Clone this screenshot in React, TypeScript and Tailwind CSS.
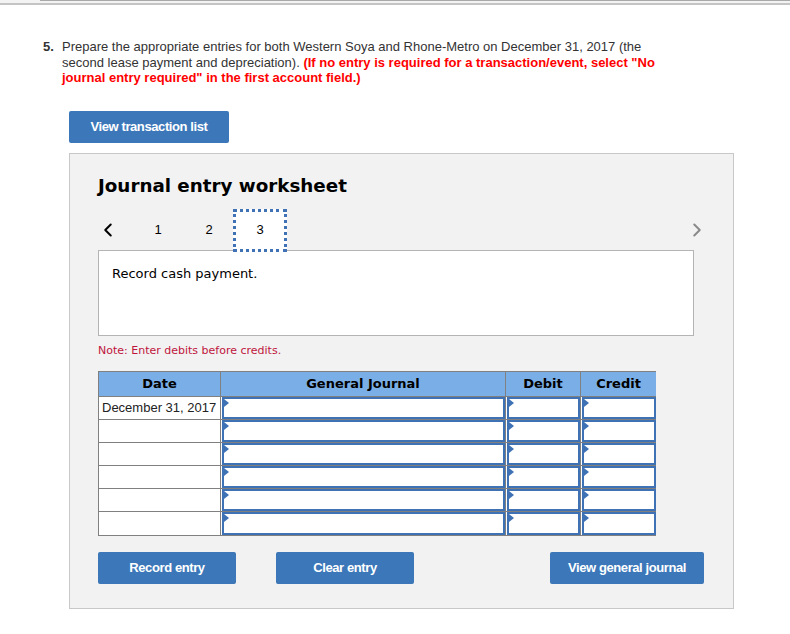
import { ChevronLeft, ChevronRight } from "lucide-react";

const rows = ["December 31, 2017", "", "", "", "", ""];

function InputCell() {
  return (
    <div className="relative h-full border-2 border-[#3f72b5] bg-white">
      <span className="absolute left-0 top-0 h-0 w-0 border-y-[4px] border-l-[5px] border-y-transparent border-l-[#3f72b5]" />
    </div>
  );
}

export default function App() {
  return (
    <div className="relative h-[634px] w-[790px] overflow-hidden bg-white font-['Liberation_Sans',Arial,sans-serif]">
      {/* top strip */}
      <div className="h-[5px] border-b-2 border-[#c4c4c4] bg-[#f3f3f3]">
        <div className="ml-[40px] h-px bg-[#a9a9a9]" />
      </div>

      {/* question */}
      <div className="mt-[34px] flex pl-[43px] text-[13px] leading-[15.5px] text-[#333]">
        <span className="w-[19px] shrink-0 font-bold">5.</span>
        <p className="w-[596px]">
          Prepare the appropriate entries for both Western Soya and Rhone-Metro on December 31, 2017 (the
          second lease payment and depreciation).{" "}
          <span className="font-bold text-[#ff0000]">
            (If no entry is required for a transaction/event, select "No journal entry required" in the first
            account field.)
          </span>
        </p>
      </div>

      <div className="mt-[25px] pl-[69px]">
        <button className="h-[32px] w-[160px] rounded-[2px] bg-[#3b77b9] text-[13px] font-bold tracking-[-0.4px] text-white">
          View transaction list
        </button>
      </div>

      {/* worksheet panel */}
      <div className="ml-[69px] mt-[10px] h-[456px] w-[665px] border border-[#c8c8c8] bg-[#f2f2f2] pl-[28px] pt-[21px]">
        <h2 className="font-['DejaVu_Sans',Verdana,sans-serif] text-[18.3px] font-bold leading-[22px] text-black">
          Journal entry worksheet
        </h2>

        <div className="mt-[12px] flex h-[43px] w-[596px] items-center text-[13px] text-black">
          <ChevronLeft className="ml-[-1px] h-[22px] w-[22px] text-black" strokeWidth={2.2} />
          <span className="ml-[34px] w-[10px] text-center">1</span>
          <span className="ml-[41px] w-[10px] text-center">2</span>
          <span className="ml-[19px] flex h-[43px] w-[54px] items-center justify-center border-[3px] border-dotted border-[#3f72b5] bg-white">
            3
          </span>
          <ChevronRight className="ml-auto mr-[-14px] h-[22px] w-[22px] text-[#8a8a8a]" strokeWidth={2.2} />
        </div>

        <div className="mt-[-2px] h-[86px] w-[596px] border border-[#b4b4b4] bg-white pl-[13px] pt-[13px] font-['DejaVu_Sans',Verdana,sans-serif] text-[13px] text-black">
          Record cash payment.
        </div>

        <p className="mt-[8px] font-['DejaVu_Sans',Verdana,sans-serif] text-[11px] leading-[14px] text-[#c0143c]">
          Note: Enter debits before credits.
        </p>

        <div className="mt-[13px] grid w-[558px] grid-cols-[122px_285px_75px_75px] border border-[#808080] bg-white">
          <div className="flex h-[25px] items-center justify-center border-r border-b border-[#808080] bg-[#7aaee6] font-['DejaVu_Sans',Verdana,sans-serif] text-[13px] font-bold">
            Date
          </div>
          <div className="flex h-[25px] items-center justify-center border-r border-b border-[#808080] bg-[#7aaee6] font-['DejaVu_Sans',Verdana,sans-serif] text-[13px] font-bold">
            General Journal
          </div>
          <div className="flex h-[25px] items-center justify-center border-r border-b border-[#808080] bg-[#7aaee6] font-['DejaVu_Sans',Verdana,sans-serif] text-[13px] font-bold">
            Debit
          </div>
          <div className="flex h-[25px] items-center justify-center border-b border-[#808080] bg-[#7aaee6] font-['DejaVu_Sans',Verdana,sans-serif] text-[13px] font-bold">
            Credit
          </div>
          {rows.map((date, i) => (
            <div key={i} className="contents">
              <div
                className={`flex h-[23px] items-center border-r border-[#808080] pl-[3px] text-[13px] text-[#222] ${
                  i < rows.length - 1 ? "border-b" : ""
                }`}
              >
                {date}
              </div>
              <div className={`h-[23px] border-r border-[#808080] pl-px ${i < rows.length - 1 ? "border-b" : ""}`}>
                <InputCell />
              </div>
              <div className={`h-[23px] border-r border-[#808080] pl-px ${i < rows.length - 1 ? "border-b" : ""}`}>
                <InputCell />
              </div>
              <div className={`h-[23px] border-[#808080] pl-px ${i < rows.length - 1 ? "border-b" : ""}`}>
                <InputCell />
              </div>
            </div>
          ))}
        </div>

        <div className="mt-[16px] flex w-[606px] text-[13px] font-bold tracking-[-0.4px] text-white">
          <button className="h-[32px] w-[138px] rounded-[2px] bg-[#3b77b9]">Record entry</button>
          <button className="ml-[40px] h-[32px] w-[138px] rounded-[2px] bg-[#3b77b9]">Clear entry</button>
          <button className="ml-auto h-[32px] w-[154px] rounded-[2px] bg-[#3b77b9]">View general journal</button>
        </div>
      </div>
    </div>
  );
}
